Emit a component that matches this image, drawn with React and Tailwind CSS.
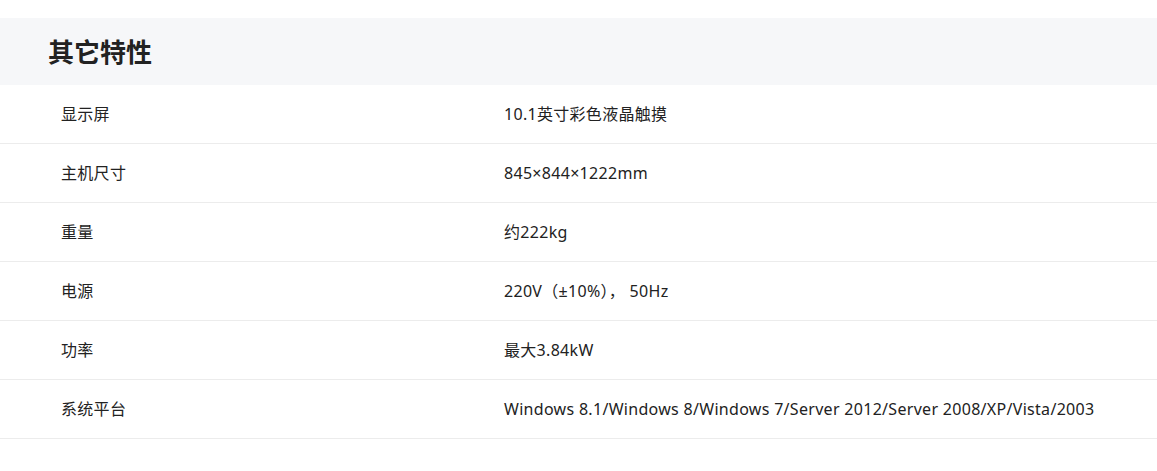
import React from 'react';

const rows = [
  ['显示屏', '10.1英寸彩色液晶触摸'],
  ['主机尺寸', '845×844×1222mm'],
  ['重量', '约222kg'],
  ['电源', '220V（±10%）， 50Hz'],
  ['功率', '最大3.84kW'],
  ['系统平台', 'Windows 8.1/Windows 8/Windows 7/Server 2012/Server 2008/XP/Vista/2003'],
];

export default function App() {
  return (
    <div className="min-h-[471px] bg-white pt-[18px] font-['Noto_Sans','Noto_Sans_CJK_SC',sans-serif] text-[#222]">
      <div className="flex h-[67px] items-center bg-[#f6f7f9] pl-12">
        <h2 className="text-[26px] font-bold leading-none text-[#222]">其它特性</h2>
      </div>
      <div>
        {rows.map(([k, v]) => (
          <div key={k} className="grid h-[59px] grid-cols-[504px_1fr] items-center border-b border-[#ececec] text-[16px] tracking-[0.3px]">
            <div className="pl-[61px]">{k}</div>
            <div>{v}</div>
          </div>
        ))}
      </div>
    </div>
  );
}
